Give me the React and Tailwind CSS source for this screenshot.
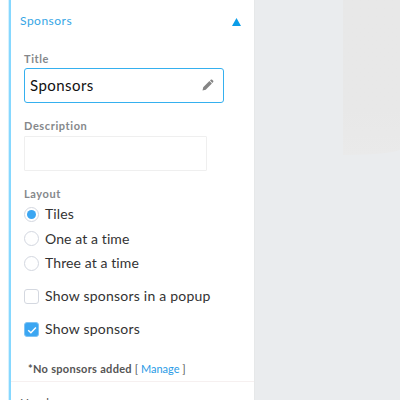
import React, { useState } from 'react';

const LAYOUTS = ['Tiles', 'One at a time', 'Three at a time'];

function FieldLabel({ children }) {
  return <div className="h-[17px] text-[11px] font-bold leading-[16px] tracking-[0.6px] text-[#85888b]">{children}</div>;
}

function Radio({ label, checked, onChange }) {
  return (
    <label className="flex h-[24.5px] items-center gap-[6px] cursor-pointer">
      <input type="radio" name="layout" checked={checked} onChange={onChange} className="sr-only" />
      <span className="flex size-[15px] items-center justify-center rounded-full border border-[#d3d7e0] bg-white">
        {checked && <span className="size-[9px] rounded-full bg-[#3ba6f2]" />}
      </span>
      <span>{label}</span>
    </label>
  );
}

function Checkbox({ label, checked, onChange }) {
  return (
    <label className="flex h-[33px] items-center gap-[6px] cursor-pointer">
      <input type="checkbox" checked={checked} onChange={onChange} className="sr-only" />
      <span className={`mt-px flex size-[15px] items-center justify-center rounded-[3px] border ${checked ? 'border-[#7fc3f4] bg-[#3ba6f2]' : 'border-[#d4d8e0] bg-white'}`}>
        {checked && (
          <svg viewBox="0 0 10 10" className="size-[10px]" fill="none" stroke="#fff" strokeWidth="1.5">
            <path d="M1.2 5.2 L3.9 7.7 L8.9 2.5" />
          </svg>
        )}
      </span>
      <span>{label}</span>
    </label>
  );
}

export default function App() {
  const [layout, setLayout] = useState('Tiles');
  const [popup, setPopup] = useState(false);
  const [show, setShow] = useState(true);

  return (
    <div className="flex h-[400px] w-[400px] overflow-hidden bg-[#eaecee] font-['Lato',sans-serif] text-[#333] [font-variant-ligatures:none]">
      {/* Settings panel */}
      <aside className="flex w-[254px] shrink-0 pl-[8px] bg-white">
        <div className="w-[3px] shrink-0 border-l border-[#d5f1ff] bg-[#86d8ff]" />
        <div className="min-w-0 flex-1">
          <section className="h-[382px] border-b border-[#f6f0f0]">
            <div className="flex h-[42px] items-center justify-between pl-[9px] pr-[13px]">
              <h2 className="text-[12px] tracking-[0.5px] text-[#35a5e5]">Sponsors</h2>
              <svg viewBox="0 0 9 8" className="mt-[2px] h-[8px] w-[9px]" fill="#0b9de8">
                <path d="M4.5 0 L9 8 H0 Z" />
              </svg>
            </div>

            <div className="pl-[13px]">
              <div className="mt-[9px]">
                <FieldLabel>Title</FieldLabel>
              </div>
              <div className="flex h-[35px] w-[200px] items-center justify-between rounded-[3px] border border-[#35b0ef] pl-[5px] pr-[9px]">
                <span className="text-[15px] tracking-[0.45px] text-[#111]">Sponsors</span>
                <svg viewBox="0 0 12 12" className="mb-[2px] size-[12px]" fill="#858585">
                  <path d="M0.5 11.5 L1.2 8.3 L7.4 2.1 L9.9 4.6 L3.7 10.8 Z M8 1.5 L9 0.6 Q9.6 0.2 10.2 0.8 L11.2 1.8 Q11.7 2.4 11.2 3 L10.4 4 Z" />
                </svg>
              </div>

              <div className="mt-[15px] mb-px">
                <FieldLabel>Description</FieldLabel>
              </div>
              <div className="h-[35px] w-[183px] rounded-[1px] border border-[#efefef]" />

              <div className="mt-[15px] -mb-px">
                <FieldLabel>Layout</FieldLabel>
              </div>
              <div className="text-[14px] leading-[20px] tracking-[0.1px]">
                {LAYOUTS.map((l) => (
                  <Radio key={l} label={l} checked={layout === l} onChange={() => setLayout(l)} />
                ))}
              </div>

              <div className="mt-[4px] text-[14px] leading-[20px] tracking-[0.22px]">
                <Checkbox label="Show sponsors in a popup" checked={popup} onChange={() => setPopup(!popup)} />
                <Checkbox label="Show sponsors" checked={show} onChange={() => setShow(!show)} />
              </div>

              <p className="mt-[15px] whitespace-pre pl-[4px] text-[11px] leading-[16px] text-[#555]">
                <b className="tracking-[0.3px]">*No sponsors added</b> [ <a className="text-[#2a9be6]">Manage</a> ]
              </p>
            </div>
          </section>
          <div className="pl-[9px] pt-[13px] text-[12px] tracking-[0.35px] leading-[16px] text-[#555]">Header</div>
        </div>
      </aside>

      {/* Page preview */}
      <main className="flex flex-1 justify-end border-l border-[#e6e8e9]">
        <div className="h-[155px] w-[57px] rounded-br-[57px_6px] bg-gradient-to-b from-[#e8e8e8] from-70% to-[#eaeaea]" />
      </main>
    </div>
  );
}
